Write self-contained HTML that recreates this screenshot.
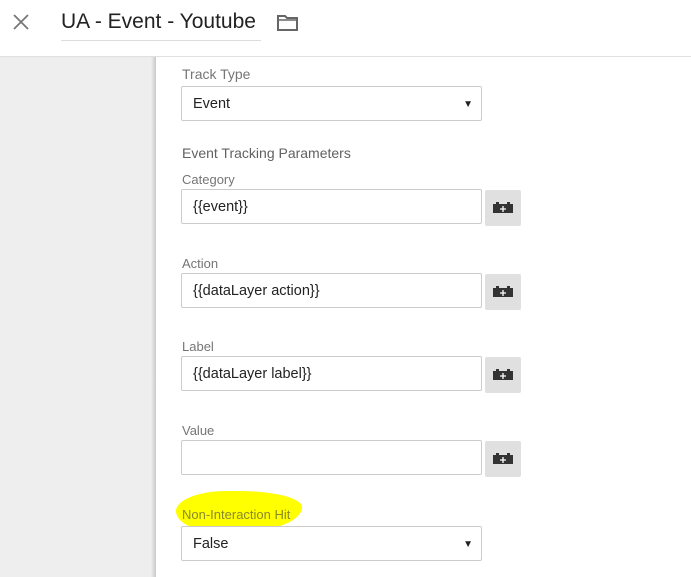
<!DOCTYPE html>
<html><head><style>
body{margin:0;width:691px;height:577px;overflow:hidden;background:#fff;font-family:"Liberation Sans",Arial,sans-serif;position:relative}
.abs{position:absolute}
.lbl{position:absolute;left:182px;font-size:13px;color:#757575}
.inp{position:absolute;left:181px;height:33px;border:1px solid #ccc;border-radius:2px;background:#fff;font-size:14.5px;color:#222;line-height:35px;padding-left:11px;box-sizing:content-box;width:288px}
.btn{position:absolute;left:485px;width:36px;height:36px;background:#e0e0e0;border-radius:2px}
.arrow{position:absolute;right:8px;top:0;font-size:10px;color:#222}
</style></head><body>
<div class="abs" style="left:0;top:0;width:691px;height:56px;border-bottom:1px solid #e0e0e0;background:#fff"></div>
<svg class="abs" style="left:12px;top:13px" width="18" height="18"><path d="M2 2L16 16M16 2L2 16" stroke="#777" stroke-width="1.8"/></svg>
<div class="abs" style="left:61px;top:10px;font-size:21px;color:#222">UA - Event - Youtube</div>
<div class="abs" style="left:61px;top:40px;width:200px;height:1px;background:#ddd"></div>
<svg class="abs" style="left:276px;top:13px" width="24" height="20"><path d="M2 3h7l2 2h10v12H2z" fill="none" stroke="#666" stroke-width="2"/><path d="M2 7h19" stroke="#666" stroke-width="1.5"/></svg>
<div class="abs" style="left:0;top:57px;width:155px;height:520px;background:#eee"></div>
<div class="abs" style="left:151px;top:57px;width:5px;height:520px;background:linear-gradient(90deg,#eee,#c8c8c8)"></div>
<div class="lbl" style="top:66px;font-size:14px">Track Type</div>
<div class="inp" style="top:86px">Event<span class="arrow">▼</span></div>
<div class="lbl" style="top:145px;font-size:14px;color:#616161">Event Tracking Parameters</div>
<div class="lbl" style="top:172px">Category</div>
<div class="inp" style="top:189px">{{event}}</div>
<div class="lbl" style="top:256px">Action</div>
<div class="inp" style="top:273px">{{dataLayer action}}</div>
<div class="lbl" style="top:339px">Label</div>
<div class="inp" style="top:356px">{{dataLayer label}}</div>
<div class="lbl" style="top:423px">Value</div>
<div class="inp" style="top:440px"></div>
<div class="btn" style="top:190px"></div><div class="btn" style="top:274px"></div><div class="btn" style="top:357px"></div><div class="btn" style="top:441px"></div>
<svg class="abs" style="left:485px;top:190px" width="36" height="290">
<g id="b"><path d="M8 14h3v-2h3v2h8v-2h3v2h3v9H8z" fill="#333"/><path d="M18 16v6M15 19h6" stroke="#fff" stroke-width="1.3"/></g>
<use href="#b" y="84"/><use href="#b" y="167"/><use href="#b" y="251"/>
</svg>
<div class="abs" style="left:176px;top:491px;width:126px;height:40px;background:#ffff00;border-radius:40% 50% 45% 30%/50% 40% 60% 50%"></div>
<div class="lbl" style="top:507px;color:#8a8a2a">Non-Interaction Hit</div>
<div class="inp" style="top:526px">False<span class="arrow">▼</span></div>
</body></html>
